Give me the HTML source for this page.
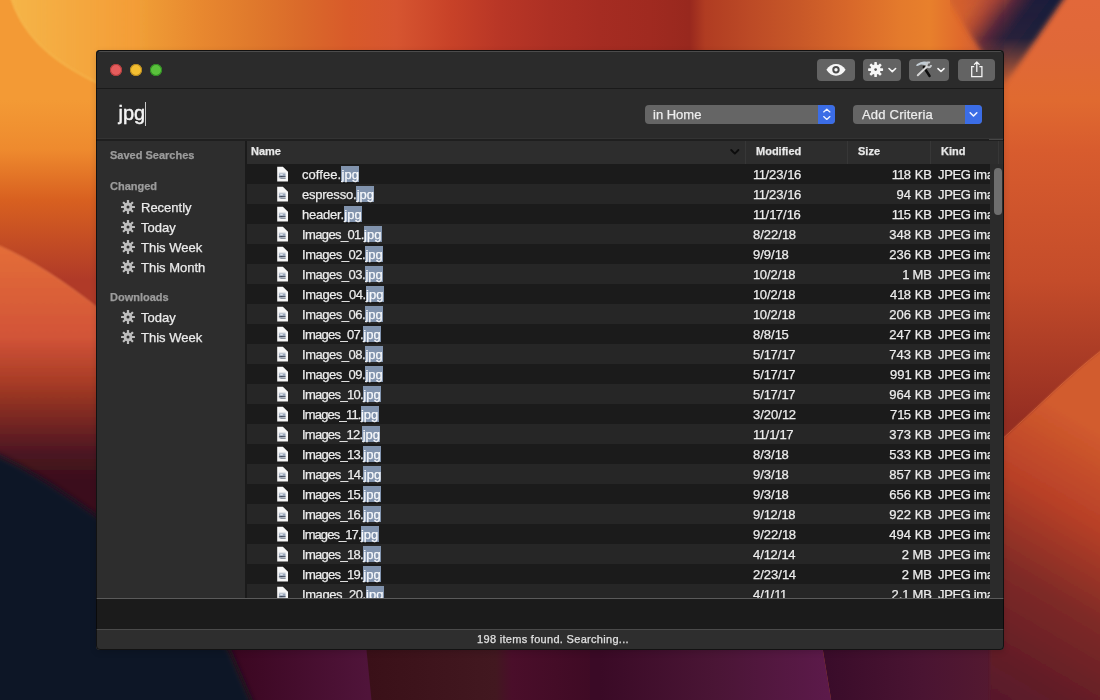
<!DOCTYPE html>
<html><head><meta charset="utf-8">
<style>
*{margin:0;padding:0;box-sizing:border-box}
html,body{width:1100px;height:700px;overflow:hidden;background:#0a1526}
body{position:relative;font-family:"Liberation Sans",sans-serif;}
#win{-webkit-text-stroke:0.25px currentColor}
#bg{position:absolute;left:0;top:0}
#win{will-change:transform;position:absolute;left:96px;top:50px;width:908px;height:600px;border-radius:4px;background:#2a2a2a;overflow:hidden;
 box-shadow:0 2px 6px rgba(0,0,0,0.15);}
#frame{position:absolute;left:0;top:0;width:908px;height:600px;border-radius:4px;border:1px solid rgba(0,0,0,0.6);pointer-events:none}
.abs{position:absolute}
#title{left:0;top:0;width:908px;height:39px;background:#2b2b2b;border-bottom:1px solid #1a1a1a;}
#hi{position:absolute;left:3px;top:1px;width:902px;height:1px;background:#4c4c4c}
.tl{position:absolute;top:14px;width:12px;height:12px;border-radius:50%}
.tb{position:absolute;top:9px;height:22px;border-radius:4px;background:#636363}
#search{left:0;top:39px;width:908px;height:50px;background:#2b2b2b;box-shadow:inset 0 -1px 0 #333}
#sep2{left:0;top:89px;width:908px;height:2px;background:#1f1f1f}
#q{position:absolute;left:22.5px;top:12.4px;font-size:20px;color:#f4f4f4;line-height:24px;-webkit-text-stroke:0.45px #f4f4f4}
#caret{position:absolute;left:49px;top:13px;width:1.3px;height:23.5px;background:#c8c8c8}
.pop{position:absolute;top:16px;height:19px;border-radius:4px;background:#656565;color:#ececec;font-size:13px;line-height:19px;overflow:hidden}
.pop .bl{position:absolute;right:0;top:0;width:17px;height:19px;background:#3b6de6}
#side{left:0;top:91px;width:151px;height:457px;background:#2d2d2d;border-right:2px solid #1b1b1b}
.sh{position:absolute;left:14px;font-size:11px;font-weight:bold;color:#9c9c9c;line-height:14px}
.si{position:absolute;left:24px;font-size:13px;color:#ebebeb;line-height:20px;height:20px}
.si svg{position:absolute;left:1px;top:2px}
.si span{position:absolute;left:21px;top:0;white-space:nowrap}
#hdr{left:151px;top:91px;width:757px;height:23px;background:#2d2d2d}
.hc{position:absolute;top:-2px;font-size:11px;font-weight:bold;color:#e8e8e8;line-height:24px}
.hdv{position:absolute;top:0;width:1px;height:23px;background:#373737}
#tbl{left:151px;top:114px;width:743px;height:434px;overflow:hidden;background:#1b1b1b}
.row{position:absolute;left:0;width:743px;height:20px;font-size:13px;color:#ececec;line-height:20px;white-space:nowrap}
.row.d{background:#1b1b1b}
.row.l{background:#262626}
.row .fi{position:absolute;left:30px;top:2px}
.row .nm{position:absolute;left:55px;top:1px}
.hl{position:absolute;top:2px;width:18px;height:16px;background:#8193ad;color:#f6f8fb}
.hl span{position:absolute;left:0.4px;top:0;line-height:20px;margin-top:-1px}
.row .md{position:absolute;left:506px;top:1px}
.row .sz{position:absolute;right:58px;top:1px;text-align:right}
.row .kd{position:absolute;left:691px;top:1px;width:52px;overflow:hidden;letter-spacing:-0.35px}
#scr{left:894px;top:114px;width:14px;height:434px;background:#2b2b2b}
#thumb{position:absolute;left:3.5px;top:3.5px;width:8px;height:47px;border-radius:4px;background:#6e6e6e}
#bot{left:0;top:548px;width:908px;height:32px;background:#1b1b1b;border-top:1px solid #5a5a5a;border-bottom:1px solid #4a4a4a}
#status{left:0;top:580px;width:908px;height:20px;background:#2e2e2e;text-align:center;font-size:11px;color:#e0e0e0;line-height:19px;letter-spacing:0.3px;padding-left:6px}
</style></head><body>
<svg width="0" height="0" style="position:absolute">
<defs>
<g id="fileic">
<path d="M0.2 0.8 H5.9 L11 5.7 V15.4 H0.2 Z" fill="#f7f7f7"/>
<rect x="1.9" y="6.4" width="6.8" height="6.4" fill="#d4d9e0"/>
<rect x="2.2" y="7.6" width="6.2" height="2.6" fill="#9aa8bc"/>
<rect x="3.2" y="8.2" width="2.6" height="1" fill="#eef2f8"/>
<path d="M1.8 10.6 L4 10 L8.6 10.2 L8.6 11 L3.6 11.2 L1.8 11.3 Z" fill="#3a4252"/>
<rect x="3.4" y="11.8" width="5.2" height="1" fill="#7a8290"/>
</g>
<g id="gearic">
<g fill="#bdbdbd">
<circle cx="7" cy="7" r="4.4"/>
<rect x="5.9" y="0" width="2.2" height="14" rx="0.5"/>
<rect x="5.9" y="0" width="2.2" height="14" rx="0.5" transform="rotate(45 7 7)"/>
<rect x="5.9" y="0" width="2.2" height="14" rx="0.5" transform="rotate(90 7 7)"/>
<rect x="5.9" y="0" width="2.2" height="14" rx="0.5" transform="rotate(135 7 7)"/>
</g>
<circle cx="7" cy="7" r="1.5" fill="#2d2d2d"/>
</g>
</defs>
</svg>
<svg id="bg" width="1100" height="700" viewBox="0 0 1100 700">
<defs>
<linearGradient id="gtop" x1="0" y1="0" x2="1100" y2="0" gradientUnits="userSpaceOnUse">
<stop offset="0" stop-color="#f0952f"/>
<stop offset="0.091" stop-color="#f3ad40"/>
<stop offset="0.136" stop-color="#ee9a35"/>
<stop offset="0.182" stop-color="#e8882f"/>
<stop offset="0.227" stop-color="#e07a2c"/>
<stop offset="0.273" stop-color="#da6a2a"/>
<stop offset="0.318" stop-color="#d85a2a"/>
<stop offset="0.36" stop-color="#d65530"/>
<stop offset="0.409" stop-color="#c84228"/>
<stop offset="0.455" stop-color="#b83626"/>
<stop offset="0.5" stop-color="#ad3024"/>
<stop offset="0.545" stop-color="#a52c22"/>
<stop offset="0.59" stop-color="#a02a20"/>
<stop offset="0.627" stop-color="#98281e"/>
<stop offset="0.641" stop-color="#b03c22"/>
<stop offset="0.682" stop-color="#bc4a26"/>
<stop offset="0.727" stop-color="#c85828"/>
<stop offset="0.773" stop-color="#d8682a"/>
<stop offset="0.818" stop-color="#e47a2c"/>
<stop offset="0.845" stop-color="#e8802c"/>
<stop offset="0.873" stop-color="#e06a2c"/>
<stop offset="0.9" stop-color="#c85a3a"/>
<stop offset="0.93" stop-color="#d05a38"/>
<stop offset="1" stop-color="#e0683a"/>
</linearGradient>
<linearGradient id="gleft" x1="0" y1="0" x2="0" y2="700" gradientUnits="userSpaceOnUse">
<stop offset="0" stop-color="#f39a35"/>
<stop offset="0.143" stop-color="#f39a35"/>
<stop offset="0.214" stop-color="#ee8a2e"/>
<stop offset="0.286" stop-color="#d86020"/>
<stop offset="0.4" stop-color="#b03a28"/>
<stop offset="1" stop-color="#b03a28"/>
</linearGradient>
<linearGradient id="gleft2" x1="0" y1="246" x2="0" y2="700" gradientUnits="userSpaceOnUse">
<stop offset="0" stop-color="#e46e38"/>
<stop offset="0.2" stop-color="#d25438"/>
<stop offset="0.3" stop-color="#a83c26"/>
<stop offset="0.38" stop-color="#7a2820"/>
<stop offset="0.46" stop-color="#4a1520"/>
<stop offset="0.52" stop-color="#3a0f1e"/>
<stop offset="1" stop-color="#3a0f1e"/>
</linearGradient>
<linearGradient id="gright" x1="0" y1="0" x2="0" y2="700" gradientUnits="userSpaceOnUse">
<stop offset="0" stop-color="#e2683a"/>
<stop offset="0.07" stop-color="#e06838"/>
<stop offset="0.143" stop-color="#e06a30"/>
<stop offset="0.214" stop-color="#d85c2e"/>
<stop offset="0.4" stop-color="#c44c2a"/>
<stop offset="0.6" stop-color="#952e22"/>
<stop offset="1" stop-color="#8a2a28"/>
</linearGradient>
<linearGradient id="gright2" gradientUnits="userSpaceOnUse" x1="1100" y1="430" x2="930" y2="720">
<stop offset="0" stop-color="#d25c2e"/>
<stop offset="0.25" stop-color="#b84028"/>
<stop offset="0.5" stop-color="#7e2a26"/>
<stop offset="0.75" stop-color="#601c28"/>
<stop offset="1" stop-color="#4c1432"/>
</linearGradient>
<linearGradient id="gbot" x1="0" y1="0" x2="1100" y2="0" gradientUnits="userSpaceOnUse">
<stop offset="0" stop-color="#0b1626"/>
<stop offset="0.2" stop-color="#0b1626"/>
<stop offset="0.21" stop-color="#3a0620"/>
<stop offset="0.33" stop-color="#4e1438"/>
<stop offset="0.34" stop-color="#3a1018"/>
<stop offset="0.45" stop-color="#421820"/>
<stop offset="0.47" stop-color="#4a0e2a"/>
<stop offset="0.545" stop-color="#3e0a24"/>
<stop offset="0.64" stop-color="#4a1535"/>
<stop offset="0.75" stop-color="#5a1a48"/>
<stop offset="0.76" stop-color="#3a0c2a"/>
<stop offset="0.82" stop-color="#4a1530"/>
<stop offset="0.9" stop-color="#5a1a30"/>
<stop offset="0.95" stop-color="#6a2228"/>
<stop offset="1" stop-color="#7a2a22"/>
</linearGradient>
<linearGradient id="gb1" x1="229" y1="0" x2="368" y2="0" gradientUnits="userSpaceOnUse">
<stop offset="0" stop-color="#3a0620"/>
<stop offset="1" stop-color="#50143a"/>
</linearGradient>
<linearGradient id="gb2" x1="368" y1="0" x2="600" y2="0" gradientUnits="userSpaceOnUse">
<stop offset="0" stop-color="#3a1018"/>
<stop offset="0.55" stop-color="#421820"/>
<stop offset="0.62" stop-color="#4a0e2a"/>
<stop offset="1" stop-color="#3e0a24"/>
</linearGradient>
<linearGradient id="gb3" x1="600" y1="0" x2="828" y2="0" gradientUnits="userSpaceOnUse">
<stop offset="0" stop-color="#3a0a26"/>
<stop offset="0.5" stop-color="#4a1535"/>
<stop offset="1" stop-color="#5c1a4a"/>
</linearGradient>
<linearGradient id="gb4" x1="828" y1="0" x2="1100" y2="0" gradientUnits="userSpaceOnUse">
<stop offset="0" stop-color="#3a0c2a"/>
<stop offset="0.35" stop-color="#4a1432"/>
<stop offset="0.65" stop-color="#561a30"/>
<stop offset="1" stop-color="#5e1c2c"/>
</linearGradient>
<linearGradient id="gyl" x1="10" y1="0" x2="150" y2="0" gradientUnits="userSpaceOnUse">
<stop offset="0" stop-color="#f6c050" stop-opacity="0.7"/>
<stop offset="1" stop-color="#f6c050" stop-opacity="0"/>
</linearGradient>
<filter id="b10" x="-50%" y="-50%" width="200%" height="200%"><feGaussianBlur stdDeviation="10"/></filter>
<filter id="b6" x="-50%" y="-50%" width="200%" height="200%"><feGaussianBlur stdDeviation="6"/></filter>
<linearGradient id="gsp" gradientUnits="userSpaceOnUse" x1="1062" y1="0" x2="1006" y2="-42">
<stop offset="0" stop-color="#181a3a"/>
<stop offset="0.1" stop-color="#181a3a"/>
<stop offset="0.33" stop-color="#201c3a"/>
<stop offset="0.55" stop-color="#46203a" stop-opacity="0.9"/>
<stop offset="0.8" stop-color="#8a3432" stop-opacity="0.5"/>
<stop offset="1.0" stop-color="#a84030" stop-opacity="0.25"/>
</linearGradient>
<linearGradient id="gspm" gradientUnits="userSpaceOnUse" x1="0" y1="0" x2="0" y2="84">
<stop offset="0" stop-color="#fff"/>
<stop offset="0.45" stop-color="#fff" stop-opacity="0.95"/>
<stop offset="1" stop-color="#fff" stop-opacity="0.1"/>
</linearGradient>
<mask id="msp" maskUnits="userSpaceOnUse" x="950" y="-20" width="150" height="120"><rect x="950" y="-20" width="150" height="120" fill="url(#gspm)"/></mask>
<filter id="b2" x="-20%" y="-20%" width="140%" height="140%"><feGaussianBlur stdDeviation="2.5"/></filter>
<filter id="b3" x="-20%" y="-20%" width="140%" height="140%"><feGaussianBlur stdDeviation="3"/></filter>
<filter id="b1" x="-5%" y="-5%" width="110%" height="110%"><feGaussianBlur stdDeviation="0.8"/></filter>
</defs>
<rect width="1100" height="700" fill="url(#gtop)"/>
<rect x="0" y="0" width="140" height="700" fill="url(#gleft)"/>
<rect x="1004" y="0" width="96" height="700" fill="url(#gright)"/>
<g>
<path d="M200 645 L600 645 L600 705 L200 705 Z" fill="url(#gb2)"/>
<path d="M229 645 L366 645 L372 705 L255 705 Z" fill="url(#gb1)"/>
<path d="M590 645 L822 645 L832 705 L590 705 Z" fill="url(#gb3)"/>
<path d="M822 645 L1100 645 L1100 705 L832 705 Z" fill="url(#gb4)"/>
</g>
<!-- top-left yellow region right of curve -->
<path d="M10 -5 C20 28 42 58 104 86 L300 86 L300 -5 Z" fill="url(#gyl)" filter="url(#b1)"/>
<path d="M10 -5 C20 28 42 58 104 86" fill="none" stroke="#f8c458" stroke-width="1.6" opacity="0.55" filter="url(#b1)"/>
<!-- left lighter region below curve -->
<path d="M-10 242 C30 258 70 285 110 318 L110 712 L-10 712 Z" fill="url(#gleft2)" filter="url(#b1)"/>
<path d="M-10 242 C30 258 70 285 110 318" fill="none" stroke="#f08a58" stroke-width="1.2" opacity="0.5" filter="url(#b1)"/>
<!-- navy bottom-left -->
<path d="M-20 448 C20 462 60 490 110 525 L229 649 L256 712 L-20 712 Z" fill="#0b1626" filter="url(#b3)"/>
<!-- right diagonal lighter area -->
<path d="M1110 344 C1072 372 1042 404 990 450 L990 712 L1110 712 Z" fill="url(#gright2)" filter="url(#b1)"/>
<path d="M1110 344 C1072 372 1042 404 990 450" fill="none" stroke="#f08850" stroke-width="1" opacity="0.35"/>
<!-- top-right dark spike -->
<path d="M940 -12 L1071 -12 L1004 86 Z" fill="url(#gsp)" mask="url(#msp)" filter="url(#b2)"/>
</svg>
<div id="win">
 <div id="title" class="abs">
  <div id="hi"></div>
  <div class="tl" style="left:14px;background:#e55d5d;box-shadow:inset 0 0 0 1px #b03c3c"></div>
  <div class="tl" style="left:34px;background:#f4bf32;box-shadow:inset 0 0 0 1px #b88a1e"></div>
  <div class="tl" style="left:54px;background:#5ac13c;box-shadow:inset 0 0 0 1px #2e8a22"></div>
  <div class="tb" style="left:721px;width:38px"><svg width="38" height="22" viewBox="0 0 38 22"><path d="M9.4 10.8 C14 3 24 3 28.6 10.8 C24 18.6 14 18.6 9.4 10.8 Z" fill="#f6f6f6"/><circle cx="19" cy="10.8" r="3.7" fill="#4a4a4a"/><circle cx="19" cy="10.8" r="1.7" fill="#f6f6f6"/></svg></div>
  <div class="tb" style="left:767px;width:38px"><svg width="38" height="22" viewBox="0 0 38 22"><g transform="translate(12.6 10.6)"><g fill="#f6f6f6"><circle r="5"/><rect x="-1.3" y="-7.5" width="2.6" height="15" rx="0.6"/><rect x="-1.3" y="-7.5" width="2.6" height="15" rx="0.6" transform="rotate(45)"/><rect x="-1.3" y="-7.5" width="2.6" height="15" rx="0.6" transform="rotate(90)"/><rect x="-1.3" y="-7.5" width="2.6" height="15" rx="0.6" transform="rotate(135)"/></g><circle r="1.3" fill="#555"/></g><path d="M26 9.5 L29.3 12.6 L32.6 9.5" fill="none" stroke="#f6f6f6" stroke-width="1.6" stroke-linecap="round" stroke-linejoin="round"/></svg></div>
  <div class="tb" style="left:813px;width:40px"><svg width="40" height="22" viewBox="0 0 40 22"><path d="M6.8 6.4 L8.2 5.1 L11.5 3.2 L15 2.5 L18.6 2.7 L19.3 4.2 L18.5 6 L15.5 6.1 L12 5.4 L8.6 6.9 Z" fill="#c2ccd4"/><path d="M14.8 8 L20.6 17" stroke="#0c0c0c" stroke-width="2.4" stroke-linecap="round"/><path d="M21 3.7 A2.4 2.4 0 1 0 22.2 6.2" fill="none" stroke="#c6c9cc" stroke-width="2"/><path d="M17.6 7.9 L8.8 16.2" stroke="#d6d6d6" stroke-width="2" stroke-linecap="round"/><path d="M29 9.6 L32 12.5 L35 9.6" fill="none" stroke="#f6f6f6" stroke-width="1.6" stroke-linecap="round" stroke-linejoin="round"/></svg></div>
  <div class="tb" style="left:862px;width:37px"><svg width="37" height="22" viewBox="0 0 37 22"><path d="M16.2 7.6 H13.7 V17.6 H23.9 V7.6 H21.4" fill="none" stroke="#f4f4f4" stroke-width="1.3"/><path d="M18.8 12.4 V3.2 M16.4 5.4 L18.8 3 L21.2 5.4" fill="none" stroke="#f4f4f4" stroke-width="1.3" stroke-linecap="round" stroke-linejoin="round"/></svg></div>
 </div>
 <div id="search" class="abs">
  <div id="q">jpg</div><div id="caret"></div>
  <div class="pop" style="left:549px;width:190px"><span style="position:absolute;left:8px">in Home</span><div class="bl"><svg width="17" height="19" viewBox="0 0 17 19"><path d="M5.7 6.9 L8.8 4.2 L11.9 6.9 M5.7 11.6 L8.8 14.4 L11.9 11.6" fill="none" stroke="#eef2ff" stroke-width="1.35" stroke-linecap="round" stroke-linejoin="round"/></svg></div></div>
  <div class="pop" style="left:757px;width:129px"><span style="position:absolute;left:9px;letter-spacing:0.2px">Add Criteria</span><div class="bl"><svg width="17" height="19" viewBox="0 0 17 19"><path d="M5.2 7.8 L8.5 11 L11.8 7.8" fill="none" stroke="#f2f4ff" stroke-width="1.6" stroke-linecap="round" stroke-linejoin="round"/></svg></div></div>
 </div>
 <div id="sep2" class="abs"></div>
 <div id="side" class="abs">
  <div class="sh" style="top:7px">Saved Searches</div>
  <div class="sh" style="top:38px">Changed</div>
  <div class="si" style="top:57px"><svg width="14" height="14" viewBox="0 0 14 14"><use href="#gearic"/></svg><span>Recently</span></div>
  <div class="si" style="top:77px"><svg width="14" height="14" viewBox="0 0 14 14"><use href="#gearic"/></svg><span>Today</span></div>
  <div class="si" style="top:97px"><svg width="14" height="14" viewBox="0 0 14 14"><use href="#gearic"/></svg><span>This Week</span></div>
  <div class="si" style="top:117px"><svg width="14" height="14" viewBox="0 0 14 14"><use href="#gearic"/></svg><span>This Month</span></div>
  <div class="sh" style="top:149px">Downloads</div>
  <div class="si" style="top:167px"><svg width="14" height="14" viewBox="0 0 14 14"><use href="#gearic"/></svg><span>Today</span></div>
  <div class="si" style="top:187px"><svg width="14" height="14" viewBox="0 0 14 14"><use href="#gearic"/></svg><span>This Week</span></div>
 </div>
 <div id="hdr" class="abs">
  <div class="hc" style="left:4px">Name</div>
  <svg class="abs" style="left:482px;top:7px" width="12" height="8" viewBox="0 0 12 8"><path d="M2.2 2 L5.8 5.6 L9.4 2" fill="none" stroke="#0d0d0d" stroke-width="1.9" stroke-linecap="round" stroke-linejoin="round"/></svg>
  <div class="hdv" style="left:498px"></div>
  <div class="hc" style="left:509px">Modified</div>
  <div class="hdv" style="left:600px"></div>
  <div class="hc" style="left:611px">Size</div>
  <div class="hdv" style="left:683px"></div>
  <div class="hc" style="left:694px">Kind</div>
  <div class="hdv" style="left:751px"></div>
 </div>
 <div id="tbl" class="abs">
<div class="row d" style="top:0px"><svg class="fi" width="12" height="16" viewBox="0 0 12 16"><use href="#fileic"/></svg><div class="nm" style="letter-spacing:0.058px">coffee.</div><div class="hl" style="left:94.2px"><span>jpg</span></div><div class="md"><span style="letter-spacing:-0.5px">1</span><span style="letter-spacing:-0.5px">1</span>/23/<span style="letter-spacing:-0.5px">1</span>6</div><div class="sz"><span style="letter-spacing:-0.7px">1</span><span style="letter-spacing:-0.7px">1</span>8 KB</div><div class="kd">JPEG image</div></div>
<div class="row l" style="top:20px"><svg class="fi" width="12" height="16" viewBox="0 0 12 16"><use href="#fileic"/></svg><div class="nm" style="letter-spacing:-0.231px">espresso.</div><div class="hl" style="left:109.3px"><span>jpg</span></div><div class="md"><span style="letter-spacing:-0.5px">1</span><span style="letter-spacing:-0.5px">1</span>/23/<span style="letter-spacing:-0.5px">1</span>6</div><div class="sz">94 KB</div><div class="kd">JPEG image</div></div>
<div class="row d" style="top:40px"><svg class="fi" width="12" height="16" viewBox="0 0 12 16"><use href="#fileic"/></svg><div class="nm" style="letter-spacing:-0.211px">header.</div><div class="hl" style="left:96.9px"><span>jpg</span></div><div class="md"><span style="letter-spacing:-0.5px">1</span><span style="letter-spacing:-0.5px">1</span>/<span style="letter-spacing:-0.5px">1</span>7/<span style="letter-spacing:-0.5px">1</span>6</div><div class="sz"><span style="letter-spacing:-0.7px">1</span><span style="letter-spacing:-0.7px">1</span>5 KB</div><div class="kd">JPEG image</div></div>
<div class="row l" style="top:60px"><svg class="fi" width="12" height="16" viewBox="0 0 12 16"><use href="#fileic"/></svg><div class="nm" style="letter-spacing:-0.624px">Images_01.</div><div class="hl" style="left:116.7px"><span>jpg</span></div><div class="md">8/22/<span style="letter-spacing:-0.5px">1</span>8</div><div class="sz">348 KB</div><div class="kd">JPEG image</div></div>
<div class="row d" style="top:80px"><svg class="fi" width="12" height="16" viewBox="0 0 12 16"><use href="#fileic"/></svg><div class="nm" style="letter-spacing:-0.484px">Images_02.</div><div class="hl" style="left:118.1px"><span>jpg</span></div><div class="md">9/9/<span style="letter-spacing:-0.5px">1</span>8</div><div class="sz">236 KB</div><div class="kd">JPEG image</div></div>
<div class="row l" style="top:100px"><svg class="fi" width="12" height="16" viewBox="0 0 12 16"><use href="#fileic"/></svg><div class="nm" style="letter-spacing:-0.484px">Images_03.</div><div class="hl" style="left:118.1px"><span>jpg</span></div><div class="md"><span style="letter-spacing:-0.5px">1</span>0/2/<span style="letter-spacing:-0.5px">1</span>8</div><div class="sz"><span style="letter-spacing:-0.7px">1</span> MB</div><div class="kd">JPEG image</div></div>
<div class="row d" style="top:120px"><svg class="fi" width="12" height="16" viewBox="0 0 12 16"><use href="#fileic"/></svg><div class="nm" style="letter-spacing:-0.424px">Images_04.</div><div class="hl" style="left:118.7px"><span>jpg</span></div><div class="md"><span style="letter-spacing:-0.5px">1</span>0/2/<span style="letter-spacing:-0.5px">1</span>8</div><div class="sz">4<span style="letter-spacing:-0.7px">1</span>8 KB</div><div class="kd">JPEG image</div></div>
<div class="row l" style="top:140px"><svg class="fi" width="12" height="16" viewBox="0 0 12 16"><use href="#fileic"/></svg><div class="nm" style="letter-spacing:-0.484px">Images_06.</div><div class="hl" style="left:118.1px"><span>jpg</span></div><div class="md"><span style="letter-spacing:-0.5px">1</span>0/2/<span style="letter-spacing:-0.5px">1</span>8</div><div class="sz">206 KB</div><div class="kd">JPEG image</div></div>
<div class="row d" style="top:160px"><svg class="fi" width="12" height="16" viewBox="0 0 12 16"><use href="#fileic"/></svg><div class="nm" style="letter-spacing:-0.704px">Images_07.</div><div class="hl" style="left:115.9px"><span>jpg</span></div><div class="md">8/8/<span style="letter-spacing:-0.5px">1</span>5</div><div class="sz">247 KB</div><div class="kd">JPEG image</div></div>
<div class="row l" style="top:180px"><svg class="fi" width="12" height="16" viewBox="0 0 12 16"><use href="#fileic"/></svg><div class="nm" style="letter-spacing:-0.484px">Images_08.</div><div class="hl" style="left:118.1px"><span>jpg</span></div><div class="md">5/<span style="letter-spacing:-0.5px">1</span>7/<span style="letter-spacing:-0.5px">1</span>7</div><div class="sz">743 KB</div><div class="kd">JPEG image</div></div>
<div class="row d" style="top:200px"><svg class="fi" width="12" height="16" viewBox="0 0 12 16"><use href="#fileic"/></svg><div class="nm" style="letter-spacing:-0.484px">Images_09.</div><div class="hl" style="left:118.1px"><span>jpg</span></div><div class="md">5/<span style="letter-spacing:-0.5px">1</span>7/<span style="letter-spacing:-0.5px">1</span>7</div><div class="sz">99<span style="letter-spacing:-0.7px">1</span> KB</div><div class="kd">JPEG image</div></div>
<div class="row l" style="top:220px"><svg class="fi" width="12" height="16" viewBox="0 0 12 16"><use href="#fileic"/></svg><div class="nm" style="letter-spacing:-0.704px">Images_10.</div><div class="hl" style="left:115.9px"><span>jpg</span></div><div class="md">5/<span style="letter-spacing:-0.5px">1</span>7/<span style="letter-spacing:-0.5px">1</span>7</div><div class="sz">964 KB</div><div class="kd">JPEG image</div></div>
<div class="row d" style="top:240px"><svg class="fi" width="12" height="16" viewBox="0 0 12 16"><use href="#fileic"/></svg><div class="nm" style="letter-spacing:-0.837px">Images_11.</div><div class="hl" style="left:113.6px"><span>jpg</span></div><div class="md">3/20/<span style="letter-spacing:-0.5px">1</span>2</div><div class="sz">7<span style="letter-spacing:-0.7px">1</span>5 KB</div><div class="kd">JPEG image</div></div>
<div class="row l" style="top:260px"><svg class="fi" width="12" height="16" viewBox="0 0 12 16"><use href="#fileic"/></svg><div class="nm" style="letter-spacing:-0.764px">Images_12.</div><div class="hl" style="left:115.3px"><span>jpg</span></div><div class="md"><span style="letter-spacing:-0.5px">1</span><span style="letter-spacing:-0.5px">1</span>/<span style="letter-spacing:-0.5px">1</span>/<span style="letter-spacing:-0.5px">1</span>7</div><div class="sz">373 KB</div><div class="kd">JPEG image</div></div>
<div class="row d" style="top:280px"><svg class="fi" width="12" height="16" viewBox="0 0 12 16"><use href="#fileic"/></svg><div class="nm" style="letter-spacing:-0.704px">Images_13.</div><div class="hl" style="left:115.9px"><span>jpg</span></div><div class="md">8/3/<span style="letter-spacing:-0.5px">1</span>8</div><div class="sz">533 KB</div><div class="kd">JPEG image</div></div>
<div class="row l" style="top:300px"><svg class="fi" width="12" height="16" viewBox="0 0 12 16"><use href="#fileic"/></svg><div class="nm" style="letter-spacing:-0.654px">Images_14.</div><div class="hl" style="left:116.4px"><span>jpg</span></div><div class="md">9/3/<span style="letter-spacing:-0.5px">1</span>8</div><div class="sz">857 KB</div><div class="kd">JPEG image</div></div>
<div class="row d" style="top:320px"><svg class="fi" width="12" height="16" viewBox="0 0 12 16"><use href="#fileic"/></svg><div class="nm" style="letter-spacing:-0.704px">Images_15.</div><div class="hl" style="left:115.9px"><span>jpg</span></div><div class="md">9/3/<span style="letter-spacing:-0.5px">1</span>8</div><div class="sz">656 KB</div><div class="kd">JPEG image</div></div>
<div class="row l" style="top:340px"><svg class="fi" width="12" height="16" viewBox="0 0 12 16"><use href="#fileic"/></svg><div class="nm" style="letter-spacing:-0.704px">Images_16.</div><div class="hl" style="left:115.9px"><span>jpg</span></div><div class="md">9/<span style="letter-spacing:-0.5px">1</span>2/<span style="letter-spacing:-0.5px">1</span>8</div><div class="sz">922 KB</div><div class="kd">JPEG image</div></div>
<div class="row d" style="top:360px"><svg class="fi" width="12" height="16" viewBox="0 0 12 16"><use href="#fileic"/></svg><div class="nm" style="letter-spacing:-0.934px">Images_17.</div><div class="hl" style="left:113.6px"><span>jpg</span></div><div class="md">9/22/<span style="letter-spacing:-0.5px">1</span>8</div><div class="sz">494 KB</div><div class="kd">JPEG image</div></div>
<div class="row l" style="top:380px"><svg class="fi" width="12" height="16" viewBox="0 0 12 16"><use href="#fileic"/></svg><div class="nm" style="letter-spacing:-0.704px">Images_18.</div><div class="hl" style="left:115.9px"><span>jpg</span></div><div class="md">4/<span style="letter-spacing:-0.5px">1</span>2/<span style="letter-spacing:-0.5px">1</span>4</div><div class="sz">2 MB</div><div class="kd">JPEG image</div></div>
<div class="row d" style="top:400px"><svg class="fi" width="12" height="16" viewBox="0 0 12 16"><use href="#fileic"/></svg><div class="nm" style="letter-spacing:-0.704px">Images_19.</div><div class="hl" style="left:115.9px"><span>jpg</span></div><div class="md">2/23/<span style="letter-spacing:-0.5px">1</span>4</div><div class="sz">2 MB</div><div class="kd">JPEG image</div></div>
<div class="row l" style="top:420px"><svg class="fi" width="12" height="16" viewBox="0 0 12 16"><use href="#fileic"/></svg><div class="nm" style="letter-spacing:-0.424px">Images_20.</div><div class="hl" style="left:118.7px"><span>jpg</span></div><div class="md">4/<span style="letter-spacing:-0.5px">1</span>/<span style="letter-spacing:-0.5px">1</span><span style="letter-spacing:-0.5px">1</span></div><div class="sz">2.<span style="letter-spacing:-0.7px">1</span> MB</div><div class="kd">JPEG image</div></div>
 </div>
 <div id="scr" class="abs"><div id="thumb"></div></div>
 <div class="abs" style="left:893px;top:89px;width:14px;height:1px;background:#464646"></div>
 <div id="bot" class="abs"></div>
 <div id="status" class="abs">198 items found. Searching...</div>
 <div id="frame"></div>
</div>
</body></html>
